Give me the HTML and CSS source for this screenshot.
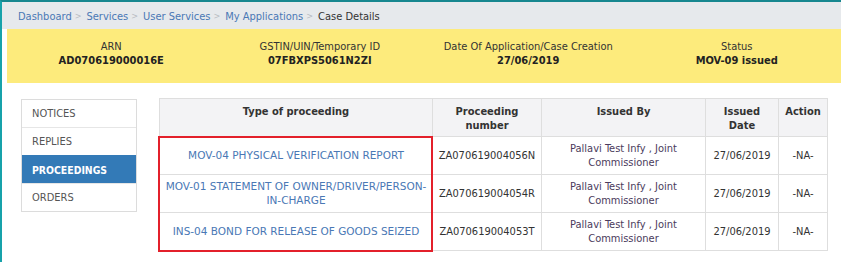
FILE: index.html
```html
<!DOCTYPE html>
<html>
<head>
<meta charset="utf-8">
<link rel="stylesheet" href="styles.css">
</head>
<body>
<div class="page">
  <div class="crumbs">
    <a>Dashboard</a><span class="sep">&gt;</span>
    <a>Services</a><span class="sep">&gt;</span>
    <a>User Services</a><span class="sep">&gt;</span>
    <a>My Applications</a><span class="sep">&gt;</span>
    <span class="cur">Case Details</span>
  </div>
  <div class="content">
    <div class="info">
      <div class="col"><div class="lbl">ARN</div><div class="val">AD070619000016E</div></div>
      <div class="col"><div class="lbl">GSTIN/UIN/Temporary ID</div><div class="val">07FBXPS5061N2ZI</div></div>
      <div class="col"><div class="lbl">Date Of Application/Case Creation</div><div class="val">27/06/2019</div></div>
      <div class="col"><div class="lbl">Status</div><div class="val">MOV-09 issued</div></div>
    </div>
    <div class="main">
      <ul class="nav">
        <li>NOTICES</li>
        <li>REPLIES</li>
        <li class="active">PROCEEDINGS</li>
        <li>ORDERS</li>
      </ul>
      <div class="tablewrap">
        <table class="grid">
          <colgroup>
            <col class="c1"><col class="c2"><col class="c3"><col class="c4"><col class="c5">
          </colgroup>
          <thead>
            <tr>
              <th>Type of proceeding</th>
              <th>Proceeding<br>number</th>
              <th>Issued By</th>
              <th>Issued<br>Date</th>
              <th>Action</th>
            </tr>
          </thead>
          <tbody>
            <tr>
              <td class="link">MOV-04 PHYSICAL VERIFICATION REPORT</td>
              <td>ZA070619004056N</td>
              <td class="by">Pallavi Test Infy , Joint<br>Commissioner</td>
              <td>27/06/2019</td>
              <td>-NA-</td>
            </tr>
            <tr>
              <td class="link">MOV-01 STATEMENT OF OWNER/DRIVER/PERSON-<br>IN-CHARGE</td>
              <td>ZA070619004054R</td>
              <td class="by">Pallavi Test Infy , Joint<br>Commissioner</td>
              <td>27/06/2019</td>
              <td>-NA-</td>
            </tr>
            <tr>
              <td class="link">INS-04 BOND FOR RELEASE OF GOODS SEIZED</td>
              <td>ZA070619004053T</td>
              <td class="by">Pallavi Test Infy , Joint<br>Commissioner</td>
              <td>27/06/2019</td>
              <td>-NA-</td>
            </tr>
          </tbody>
        </table>
        <div class="highlight"></div>
      </div>
    </div>
  </div>
</div>
</body>
</html>
```
FILE: styles.css
```css
html, body {
  margin: 0;
  padding: 0;
  background: #fff;
}
body {
  font-family: "DejaVu Sans Condensed", "DejaVu Sans", Verdana, sans-serif;
  font-size: 11px;
  color: #333;
}
.page {
  border-top: 2px solid #17878f;
  border-left: 2px solid #17a2aa;
  min-height: 100vh;
  box-sizing: border-box;
}
.crumbs {
  background: #e6e9ec;
  height: 27px;
  display: flex;
  align-items: center;
  padding-left: 16px;
  padding-top: 1px;
  box-sizing: border-box;
}
.crumbs a {
  color: #4a78b5;
}
.crumbs .sep {
  color: #b8bcc2;
  font-size: 9px;
  margin: 0 5px 0 3px;
}
.crumbs .cur {
  color: #333;
}
.content {
  padding-left: 5px;
}
.info {
  background: #fdeb7c;
  height: 54px;
  display: flex;
  padding-top: 11px;
  box-sizing: border-box;
}
.info .col {
  flex: 1;
  text-align: center;
  line-height: 14px;
}
.info .lbl {
  color: #333;
}
.info .val {
  font-weight: bold;
  color: #222;
}
.main {
  display: flex;
  align-items: flex-start;
  padding: 15px 0 0 14px;
  gap: 22px;
}
.nav {
  list-style: none;
  margin: 1px 0 0 0;
  padding: 0;
  width: 116px;
  border: 1px solid #dcdcdc;
  box-sizing: border-box;
}
.nav li {
  height: 28px;
  line-height: 28px;
  padding-left: 10px;
  color: #555;
  border-top: 1px solid #e6e6e6;
  box-sizing: border-box;
}
.nav li:first-child {
  border-top: none;
  height: 27px;
}
.nav li.active {
  background: #337ab7;
  color: #fff;
  font-weight: bold;
  font-size: 10.4px;
  border-top-color: #337ab7;
}
.tablewrap {
  position: relative;
}
.grid {
  border-collapse: collapse;
  table-layout: fixed;
  width: 668px;
}
.grid col.c1 { width: 273px; }
.grid col.c2 { width: 109px; }
.grid col.c3 { width: 164px; }
.grid col.c4 { width: 73px; }
.grid col.c5 { width: 49px; }
.grid th, .grid td {
  border: 1px solid #dedede;
  text-align: center;
  line-height: 13.5px;
}
.grid th {
  background: #f3f3f5;
  font-weight: bold;
  color: #333;
  vertical-align: top;
  height: 38px;
  padding: 6px 2px 0;
  box-sizing: border-box;
}
.grid td {
  height: 38px;
  padding: 0 3px;
  vertical-align: middle;
  color: #333;
  box-sizing: border-box;
}
.grid td.link {
  color: #4a78b5;
  font-family: "DejaVu Sans", Verdana, sans-serif;
  font-size: 10.5px;
}
.grid td.by {
  color: #4b3b5c;
}
.highlight {
  position: absolute;
  left: -1px;
  top: 38px;
  width: 275px;
  height: 116px;
  border: 2px solid #e3202b;
  box-sizing: border-box;
  pointer-events: none;
}
```
